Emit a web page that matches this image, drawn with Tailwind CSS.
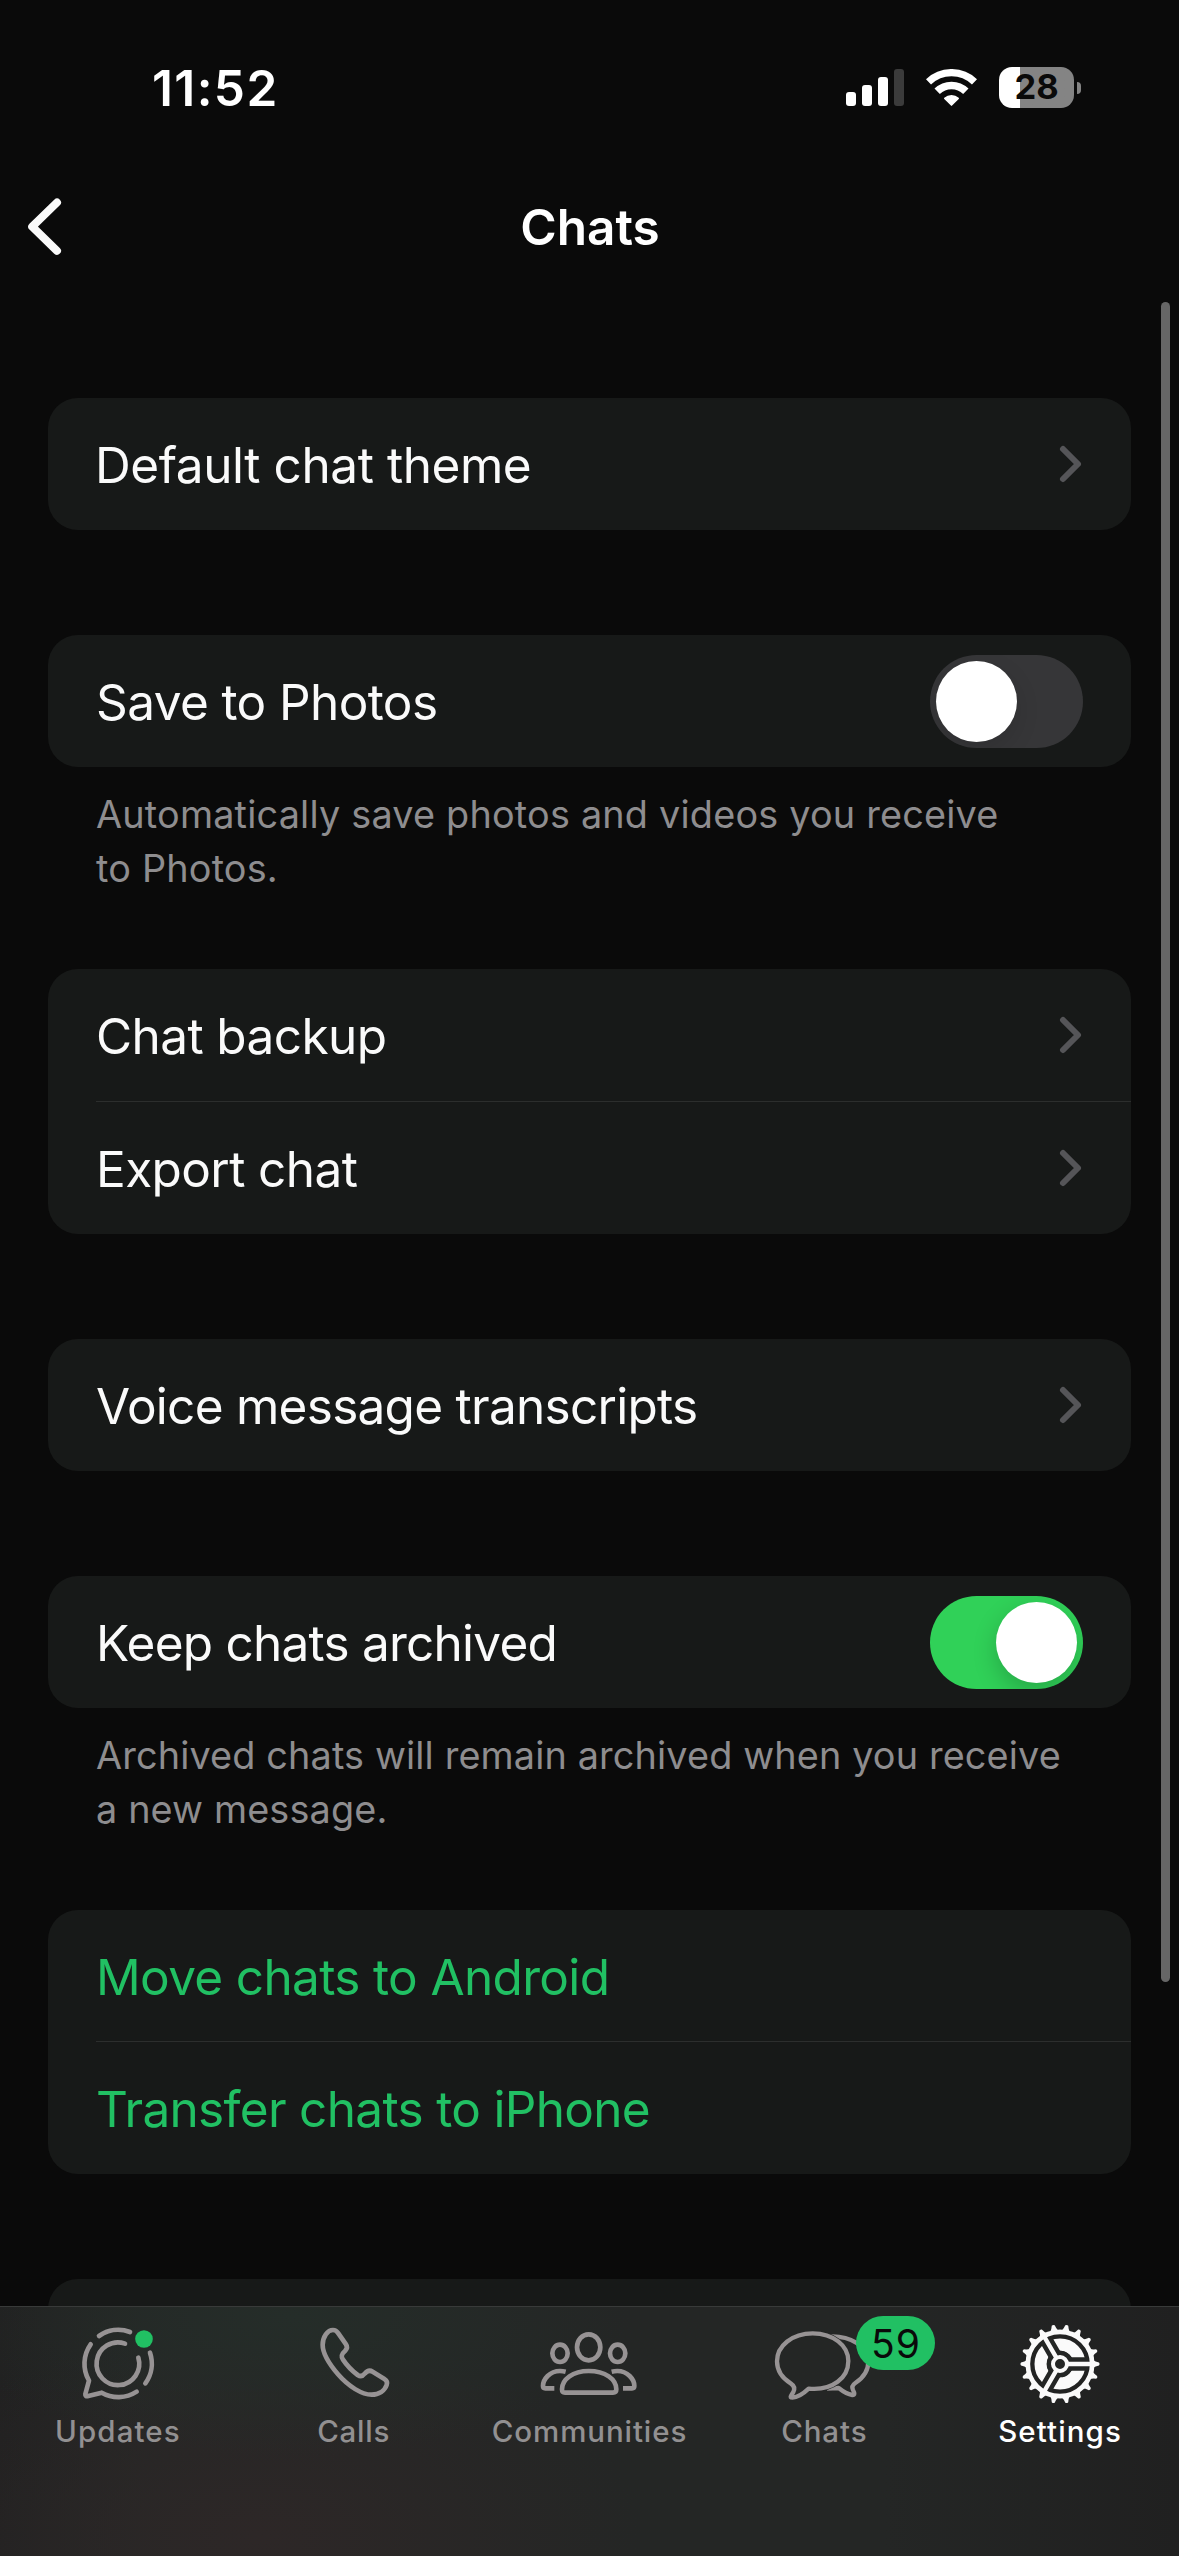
<!DOCTYPE html>
<html lang="en">
<head>
<meta charset="utf-8">
<title>Chats</title>
<script src="https://cdn.jsdelivr.net/npm/@tailwindcss/browser@4"></script>
</head>
<body class="bg-[#0a0a0a] overflow-hidden">
<div class="relative w-[1179px] h-[2556px] overflow-hidden bg-[#0a0a0a] font-['Inter',sans-serif] text-[#fafafa]">

  <!-- Status bar -->
  <div class="flex items-start justify-between h-[142px] pt-[67px] pl-[152px] pr-[98px]">
    <div class="h-[41px] leading-[42px] text-[49.5px] font-semibold tracking-[1.4px] text-white">11:52</div>
    <div class="flex items-center h-[41px]">
      <div class="flex items-end gap-[6px] h-[37px]">
        <div class="w-[10px] h-[14px] rounded-[3px] bg-white"></div>
        <div class="w-[10px] h-[21px] rounded-[3px] bg-white"></div>
        <div class="w-[10px] h-[29px] rounded-[3px] bg-white"></div>
        <div class="w-[10px] h-[37px] rounded-[3px] bg-[#3b3b3b]"></div>
      </div>
      <svg class="ml-[22px] w-[51px] h-[37px]" viewBox="-76.5 -111 153 111" fill="none" stroke="white">
        <path d="M-69 -72.4A100 100 0 0 1 69 -72.4" stroke-width="22"/>
        <path d="M-43 -44A61.5 61.5 0 0 1 43 -44" stroke-width="23"/>
        <path d="M-20 -23A31 31 0 0 1 20 -23L0 -3Z" fill="white" stroke-width="5" stroke-linejoin="round"/>
      </svg>
      <div class="ml-[22px] flex items-center justify-center w-[75px] h-[41px] rounded-[13px] bg-linear-to-r from-white from-[28%] to-[#848484] to-[28%] text-[34.5px] leading-none font-bold text-[#0a0a0a]">28</div>
      <div class="ml-[3px] w-[4px] h-[12px] rounded-r-full bg-[#848484]"></div>
    </div>
  </div>

  <!-- Navigation bar -->
  <div class="relative flex items-center justify-center h-[170px]">
    <svg class="absolute left-[24px] top-[53px] w-[42px] h-[64px]" viewBox="24 195 42 64" fill="none" stroke="#fafafa" stroke-width="8" stroke-linecap="round" stroke-linejoin="round"><path d="M57 202.5L32.2 226.7L57 250.8"/></svg>
    <h1 class="text-[49.5px] font-semibold leading-[60px] pl-px text-white">Chats</h1>
  </div>

  <main class="pt-[86px] px-[48px] text-[49.5px]">
    <section class="rounded-[30px] bg-[#171918]">
      <div class="flex items-center justify-between h-[132px] pl-[47px] pr-[48px]">
        <span class="pt-[2px] tracking-[-0.43px]">Default chat theme</span>
        <svg class="w-[25px] h-[40px]" viewBox="0 0 25 40" fill="none" stroke="#555558" stroke-width="6" stroke-linecap="round" stroke-linejoin="round"><path d="M5 5L20 20L5 35"/></svg>
      </div>
    </section>

    <section class="mt-[105px]">
      <div class="flex items-center justify-between h-[132px] pl-[48px] pr-[48px] rounded-[30px] bg-[#171918]">
        <span class="pt-[2px] tracking-[-0.6px]">Save to Photos</span>
        <div class="flex items-center w-[153px] h-[93px] p-[6px] rounded-full bg-[#363638] overflow-hidden">
          <div class="size-[81px] rounded-full bg-white shadow-[0_9px_24px_rgba(0,0,0,0.12)]"></div>
        </div>
      </div>
      <p class="px-[48px] pt-[20px] text-[37.8px] leading-[54px] tracking-[0.2px] text-[#8e8d8f]">Automatically save photos and videos you receive<br>to Photos.</p>
    </section>

    <section class="mt-[74px] rounded-[30px] bg-[#171918]">
      <div class="flex items-center justify-between h-[132px] pl-[48px] pr-[48px]">
        <span class="pt-[2px] tracking-[-0.6px]">Chat backup</span>
        <svg class="w-[25px] h-[40px]" viewBox="0 0 25 40" fill="none" stroke="#555558" stroke-width="6" stroke-linecap="round" stroke-linejoin="round"><path d="M5 5L20 20L5 35"/></svg>
      </div>
      <div class="ml-[48px] h-px bg-[#2c2e2d]"></div>
      <div class="flex items-center justify-between h-[132px] pl-[48px] pr-[48px]">
        <span class="pt-[2px] tracking-[-0.6px]">Export chat</span>
        <svg class="w-[25px] h-[40px]" viewBox="0 0 25 40" fill="none" stroke="#555558" stroke-width="6" stroke-linecap="round" stroke-linejoin="round"><path d="M5 5L20 20L5 35"/></svg>
      </div>
    </section>

    <section class="mt-[105px] rounded-[30px] bg-[#171918]">
      <div class="flex items-center justify-between h-[132px] pl-[48px] pr-[48px]">
        <span class="pt-[2px] tracking-[-0.73px]">Voice message transcripts</span>
        <svg class="w-[25px] h-[40px]" viewBox="0 0 25 40" fill="none" stroke="#555558" stroke-width="6" stroke-linecap="round" stroke-linejoin="round"><path d="M5 5L20 20L5 35"/></svg>
      </div>
    </section>

    <section class="mt-[105px]">
      <div class="flex items-center justify-between h-[132px] pl-[48px] pr-[48px] rounded-[30px] bg-[#171918]">
        <span class="pt-[2px] tracking-[-0.76px]">Keep chats archived</span>
        <div class="flex items-center justify-end w-[153px] h-[93px] p-[6px] rounded-full bg-[#30d158] overflow-hidden">
          <div class="size-[81px] rounded-full bg-white shadow-[0_9px_24px_rgba(0,0,0,0.2)]"></div>
        </div>
      </div>
      <p class="px-[48px] pt-[20px] text-[37.8px] leading-[54px] tracking-[0.14px] text-[#8e8d8f] whitespace-nowrap">Archived chats will remain archived when you receive<br>a new message.</p>
    </section>

    <section class="mt-[74px] rounded-[30px] bg-[#171918] text-[#21c063]">
      <div class="flex items-center h-[131px] pl-[48px]"><span class="pt-[3px] tracking-[-0.65px]">Move chats to Android</span></div>
      <div class="ml-[48px] h-px bg-[#2c2e2d]"></div>
      <div class="flex items-center h-[132px] pl-[48px]"><span class="pt-[2px] tracking-[-0.68px]">Transfer chats to iPhone</span></div>
    </section>

    <section class="mt-[105px] h-[132px] rounded-[30px] bg-[#171918]"></section>
  </main>

  <!-- Scroll indicator -->
  <div class="absolute left-[1161px] top-[302px] w-[9px] h-[1680px] rounded-full bg-[#666666]"></div>

  <!-- Tab bar -->
  <nav class="absolute inset-x-0 bottom-0 h-[250px] border-t border-[#383a39] bg-[#242625] bg-[radial-gradient(ellipse_340px_140px_at_290px_10px,#252d29,transparent),radial-gradient(ellipse_380px_210px_at_260px_230px,#2d2727,transparent),linear-gradient(90deg,#212121,#242625_12%,#242625_75%,#202020)] flex text-[29.5px] font-[450] text-[#929091]">
    <div class="flex-1 flex flex-col items-center pt-[15px]">
      <svg class="w-[96px] h-[84px] overflow-visible" viewBox="90 186 288 252" fill="none" stroke="#979394" stroke-width="14" stroke-linecap="round" stroke-linejoin="round">
        <path d="M177 228A101 101 0 0 1 270 216"/>
        <path d="M152 253A101 101 0 0 0 147 362L136 402Q135 411 145 408L185 398A101 101 0 0 0 290 395"/>
        <path d="M330 278A101 101 0 0 1 316 370"/>
        <path d="M255 251A64 64 0 1 0 295 293"/>
        <circle cx="312" cy="237" r="26.5" fill="#21c063" stroke="none"/>
      </svg>
      <span class="mt-[3px] leading-[44px] tracking-[1.1px]">Updates</span>
    </div>
    <div class="flex-1 flex flex-col items-center pt-[15px]">
      <svg class="w-[96px] h-[84px] overflow-visible" viewBox="17 96 288 252" fill="none" stroke="#979394" stroke-width="14" stroke-linejoin="round">
        <path d="M67 165C67 140 82 120 98 120C106 120 110 124 114 130L137 163C142 170 140 177 134 183C122 193 122 200 128 209C140 227 157 244 172 255C181 261 187 259 193 251C202 240 209 240 217 245L251 266C260 272 262 278 259 285C253 302 236 314 214 314C185 314 145 290 113 253C85 220 67 190 67 165Z"/>
      </svg>
      <span class="mt-[3px] leading-[44px] tracking-[0.8px]">Calls</span>
    </div>
    <div class="flex-1 flex flex-col items-center pt-[15px]">
      <svg class="w-[96px] h-[84px] overflow-visible" viewBox="304 186 288 252" fill="none" stroke="#979394" stroke-width="14" stroke-linejoin="round">
        <ellipse cx="447" cy="262" rx="35" ry="39"/>
        <ellipse cx="361" cy="280" rx="23" ry="26"/>
        <ellipse cx="534" cy="280" rx="23" ry="26"/>
        <path d="M367 388C367 358 400 333 447 333C497 333 530 358 530 388C530 395 527 398 520 398H376C369 398 367 395 367 388Z"/>
        <path d="M378 335Q370 333 361 333C330 333 310 358 310 378C310 384 312 385 317 385H344"/>
        <path d="M516 335Q524 333 533 333C564 333 584 358 584 378C584 384 582 385 577 385H550"/>
      </svg>
      <span class="mt-[3px] leading-[44px] tracking-[0.9px]">Communities</span>
    </div>
    <div class="relative flex-1 flex flex-col items-center pt-[15px]">
      <svg class="w-[96px] h-[84px] overflow-visible" viewBox="112 186 288 252" fill="none" stroke="#979394" stroke-width="13" stroke-linejoin="round">
        <path d="M272 229C330 227 386 258 386 305C386 335 368 355 347 369C338 375 336 382 340 390C345 399 346 405 338 405C325 403 312 396 297 384L262 386"/>
        <path stroke="#242625" stroke-width="17" d="M219 220C281 220 326 257 326 303C326 352 280 393 207 386"/>
        <path d="M219 220C158 220 112 257 112 304C112 333 130 356 154 371C163 377 166 386 161 396C156 404 151 411 154 412C172 415 190 402 207 386C280 393 326 352 326 303C326 257 281 220 219 220Z"/>
      </svg>
      <span class="mt-[3px] leading-[44px] tracking-[0.9px] -translate-x-px">Chats</span>
      <span class="absolute left-[149px] top-[9px] flex items-center justify-center w-[79px] h-[54px] rounded-full bg-[#21c063] text-[39px] leading-none font-normal tracking-[1px] text-[#0a0a0a]">59</span>
    </div>
    <div class="flex-1 flex flex-col items-center pt-[15px] text-white">
      <svg class="w-[96px] h-[84px] overflow-visible" viewBox="-141 -126 288 252" fill="none" stroke="#fafafa">
        <defs><path id="t" d="M98 -13Q106 -7 117 -4.5Q121 0 117 4.5Q106 7 98 13Z" fill="#fafafa" stroke="none"/></defs>
        <use href="#t"/><use href="#t" transform="rotate(20)"/><use href="#t" transform="rotate(40)"/><use href="#t" transform="rotate(60)"/><use href="#t" transform="rotate(80)"/><use href="#t" transform="rotate(100)"/><use href="#t" transform="rotate(120)"/><use href="#t" transform="rotate(140)"/><use href="#t" transform="rotate(160)"/><use href="#t" transform="rotate(180)"/><use href="#t" transform="rotate(200)"/><use href="#t" transform="rotate(220)"/><use href="#t" transform="rotate(240)"/><use href="#t" transform="rotate(260)"/><use href="#t" transform="rotate(280)"/><use href="#t" transform="rotate(300)"/><use href="#t" transform="rotate(320)"/><use href="#t" transform="rotate(340)"/>
        <circle r="58" stroke-width="37"/>
        <path d="M0 0H84M0 0L-42 72.7M0 0L-42 -72.7" stroke="#242625" stroke-width="40"/>
        <circle r="33" stroke="#242625" stroke-width="14"/>
        <circle r="96.5" stroke-width="14"/>
        <path d="M22 0H94M-11 19L-47 81.4M-11 -19L-47 -81.4" stroke-width="13"/>
        <circle r="21" fill="#242625" stroke-width="12"/>
      </svg>
      <span class="mt-[3px] leading-[44px] tracking-[1.1px] -translate-x-px">Settings</span>
    </div>
  </nav>
</div>
</body>
</html>
